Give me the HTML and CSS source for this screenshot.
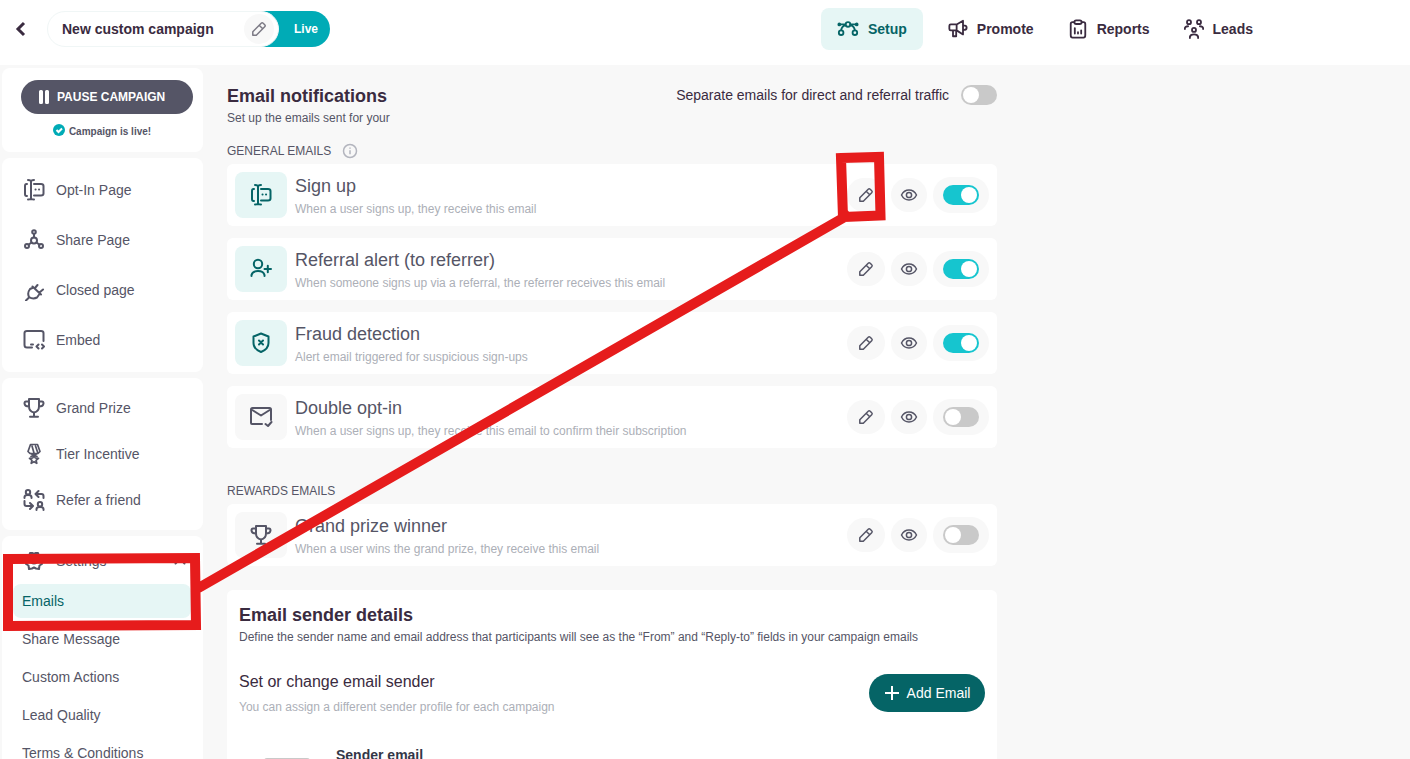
FILE: index.html
```
<!DOCTYPE html>
<html lang="en">
<head>
<meta charset="utf-8">
<title>Email notifications</title>
<link rel="stylesheet" href="styles.css">
</head>
<body>
<svg class="sprite" aria-hidden="true">
  <symbol id="optin" viewBox="0 0 22 22"><path d="M4 5H3.500Q2 5 2 7v8q0 2 1.500 2H4M11 5h7q2.500 0 2.500 2v7.500Q20.500 16.500 18 16.500h-7M8 2v18M5 1q3 0 3 1.500Q8 1 11 1M5 20.500q3 0 3-1.500 0 1.500 3 1.500"/><path d="M12.500 10.500h.1M16 10.500h.1"/></symbol>
  <symbol id="share" viewBox="0 0 22 22"><circle cx="11" cy="3" r="1.800"/><circle cx="11" cy="11.500" r="3"/><circle cx="4" cy="17" r="2"/><circle cx="18" cy="17" r="2"/><path d="M11 5v3.500M8.500 13.500l-3 2.300M13.500 13.500l3 2.300"/></symbol>
  <symbol id="plug" viewBox="0 0 22 22"><path d="M3 21.500l3-3M9.500 7.500l8.500 8M10.500 8.500L7 10q-3 4-1 8 4 2.500 8 .5l2.500-3.500M12 9l2.500-3M16.500 13.500L20 10.500"/></symbol>
  <symbol id="embed" viewBox="0 0 22 22"><path d="M9 18.500H4q-2.500 0-2.500-2.500V4Q1.500 2 4 2h14q2.500 0 2.500 2v8M8 15.500h2"/><path d="M15.500 15.500L13.500 17.500l2 2M19 15.500l2 2-2 2"/></symbol>
  <symbol id="cup" viewBox="0 0 22 22"><path d="M6 2h10v7.500q0 5-5 6-5-1-5-6zM6 4.500H3q-1.500 0-1.500 2Q2 9.500 6 9.500M16 4.500h3q1.500 0 1.500 2-.5 3-4.500 3M11 16v3.500M7 19.800h8"/></symbol>
  <symbol id="medal" viewBox="0 0 22 22"><path class="fine" d="M7.500 1.500h7l2.500 7-2 2H7L5 8.500zM9 3l2 7M12.500 3l2 6M7.500 10.500l6.500 3M14.500 10.500L8 13.500M11 12.500l1.200 2.500 3.300.3-2.500 2 .8 3L11 18.700 8.200 20.300l.8-3-2.500-2 3.300-.3z"/></symbol>
  <symbol id="refer" viewBox="0 0 22 22"><circle cx="5" cy="3.200" r="2.200"/><path d="M1.500 9V8q0-2 3.500-2t3.500 2v1M20.500 9V7q0-2-2-2H13M15.500 2L12.500 5l3 3M1.500 12v3q0 2 2 2H9M7 14l3 3-3 3"/><circle cx="17" cy="15.200" r="2.200"/><path d="M13.500 21v-1q0-2 3.500-2t3.500 2v1"/></symbol>
  <symbol id="gear" viewBox="0 0 22 22"><path d="M7 3h2.500q1.500 1.500 3 0H15l1 3.500 3 1.500-1.500 3 1.500 3-2.500 1.500-.5 3.500-3-.5-2-1-2 1-3 .5-.5-3.500L3 14l1.500-3L3 8l3-1.500z"/><circle cx="11" cy="10.500" r="3"/></symbol>
  <symbol id="setup" viewBox="0 0 24 18"><path d="M3 4h6M14.500 4h6M9 5Q5 6 4.500 10.500M15 5q4 1 4.500 5.500"/><circle cx="2.500" cy="4" r="1"/><circle cx="21.500" cy="4" r="1"/><circle cx="12" cy="4" r="2.500"/><circle cx="4.500" cy="13" r="2.500"/><circle cx="19.500" cy="13" r="2.500"/></symbol>
  <symbol id="promote" viewBox="0 0 22 22"><path d="M9.500 6H3Q1.500 6 1.500 7.500V11Q1.500 12.500 3 12.500h6.500zM9.500 6L16.500 2v15L9.500 12.500M5.500 13v6H9v-6M17 7q3.500 0 3.500 2.500T17 12"/></symbol>
  <symbol id="report" viewBox="0 0 22 22"><path d="M7 3.500H5q-2 0-2 2V18q0 2.500 2 2.500h12q2 0 2-2.500V5.500q0-2-2-2h-2"/><rect x="7" y="1.500" width="8" height="4" rx="2"/><path d="M7.500 10v6M11 14.500V16M14.500 12.500V16"/></symbol>
  <symbol id="leads" viewBox="0 0 22 22"><circle cx="5.500" cy="3.500" r="2.200"/><circle cx="16.500" cy="3.500" r="2.200"/><circle cx="11" cy="12" r="2.200"/><path d="M1 11V10q.5-2 3.500-2M21 11v-1q-.5-2-3.500-2M6.500 21v-1.500q.5-2.500 4.500-2.500t4.500 2.500V21"/></symbol>
  <symbol id="user" viewBox="0 0 22 22"><circle cx="8" cy="6" r="4.200"/><path d="M1.500 18v-1q1-4 6.500-4t6.500 4v1M14.500 11h6.500M17.800 7.800v6.400"/></symbol>
  <symbol id="shield" viewBox="0 0 22 22"><path d="M11 1.500l7.500 3V11q0 6-7.500 9Q3.500 17 3.500 11V4.500zM9 8.500l4 4M13 8.500l-4 4"/></symbol>
  <symbol id="mail" viewBox="0 0 24 22"><path d="M13 18H3Q2 18 2 17V3.500Q2 2 3.500 2h17Q22 2 22 3.500V14M2.500 3.500L12 9.500l9.500-6M16.500 18l2.500 2 3.500-4"/></symbol>
  <symbol id="pencil" viewBox="0 0 16 16"><path d="M1.800 14.200v-3.500L10.200 2.300q1-1 2 0l1.500 1.500q1 1 0 2L5.300 14.200zM8.200 4.300l3.500 3.500"/></symbol>
  <symbol id="eye" viewBox="0 0 18 14"><path d="M1.500 7Q4 2 9 2t7.500 5Q14 12 9 12T1.500 7z"/><circle cx="9" cy="7" r="2.600"/></symbol>
</svg>

<header class="topbar">
  <button class="back" aria-label="Back"><svg class="icon" width="14" height="16" viewBox="0 0 14 16"><path class="chevron" d="M10 2L4 8l6 6"/></svg></button>
  <div class="campaign">
    <div class="campaign-name"><span>New custom campaign</span><button class="rename" aria-label="Rename campaign"><svg class="icon" width="16" height="16"><use href="#pencil"/></svg></button></div>
    <span class="live">Live</span>
  </div>
  <nav class="tabs">
    <a class="tab tab-active" href="#"><svg class="icon" width="22" height="18"><use href="#setup"/></svg>Setup</a>
    <a class="tab" href="#"><svg class="icon" width="20" height="20"><use href="#promote"/></svg>Promote</a>
    <a class="tab" href="#"><svg class="icon" width="20" height="20"><use href="#report"/></svg>Reports</a>
    <a class="tab" href="#"><svg class="icon" width="20" height="20"><use href="#leads"/></svg>Leads</a>
  </nav>
</header>

<div class="layout">
  <aside class="sidebar">
    <section class="panel status">
      <button class="pause"><svg width="12" height="16" viewBox="0 0 12 16"><path class="solid" d="M2.500 1h1Q5 1 5 2.500v11Q5 15 3.500 15h-1Q1 15 1 13.500v-11Q1 1 2.500 1zM8.500 1h1Q11 1 11 2.500v11Q11 15 9.500 15h-1Q7 15 7 13.500v-11Q7 1 8.500 1z"/></svg>PAUSE CAMPAIGN</button>
      <p class="status-text"><svg width="12" height="12" viewBox="0 0 12 12"><circle class="badge" cx="6" cy="6" r="6"/><path class="tick" d="M3.500 6l2 2 3.500-3.500"/></svg><span>Campaign is live!</span></p>
    </section>
    <nav class="panel">
      <a class="side-link" href="#"><svg class="icon" width="22" height="22"><use href="#optin"/></svg>Opt-In Page</a>
      <a class="side-link" href="#"><svg class="icon" width="22" height="22"><use href="#share"/></svg>Share Page</a>
      <a class="side-link" href="#"><svg class="icon" width="22" height="22"><use href="#plug"/></svg>Closed page</a>
      <a class="side-link" href="#"><svg class="icon" width="22" height="22"><use href="#embed"/></svg>Embed</a>
    </nav>
    <nav class="panel compact">
      <a class="side-link" href="#"><svg class="icon" width="22" height="22"><use href="#cup"/></svg>Grand Prize</a>
      <a class="side-link" href="#"><svg class="icon" width="22" height="22"><use href="#medal"/></svg>Tier Incentive</a>
      <a class="side-link" href="#"><svg class="icon" width="22" height="22"><use href="#refer"/></svg>Refer a friend</a>
    </nav>
    <nav class="panel settings">
      <button class="side-link settings-toggle"><svg class="icon" width="22" height="22"><use href="#gear"/></svg>Settings<svg class="icon caret" width="12" height="8" viewBox="0 0 12 8"><path d="M1.500 6.500L6 2l4.500 4.500"/></svg></button>
      <a class="sub-link sub-active" href="#">Emails</a>
      <a class="sub-link" href="#">Share Message</a>
      <a class="sub-link" href="#">Custom Actions</a>
      <a class="sub-link" href="#">Lead Quality</a>
      <a class="sub-link" href="#">Terms &amp; Conditions</a>
    </nav>
  </aside>

  <main class="content">
    <div class="page-head">
      <div><h1>Email notifications</h1><p class="intro">Set up the emails sent for your</p></div>
      <label class="separate">Separate emails for direct and referral traffic<input class="switch" type="checkbox"></label>
    </div>

    <h2 class="group-label">GENERAL EMAILS <svg class="info" width="16" height="16" viewBox="0 0 16 16"><circle cx="8" cy="8" r="6.500"/><path d="M8 7.300v4M8 4.500v1.200"/></svg></h2>
    <div class="email-list">
      <article class="email">
        <div class="tile tile-on"><svg class="icon" width="22" height="22"><use href="#optin"/></svg></div>
        <div class="email-text"><h3>Sign up</h3><p>When a user signs up, they receive this email</p></div>
        <button class="action edit" aria-label="Edit Sign up"><svg class="icon" width="16" height="16"><use href="#pencil"/></svg></button>
        <button class="action" aria-label="Preview Sign up"><svg class="icon" width="18" height="14"><use href="#eye"/></svg></button>
        <label class="switch-wrap"><input class="switch" type="checkbox" checked aria-label="Sign up"></label>
      </article>
      <article class="email">
        <div class="tile tile-on"><svg class="icon" width="22" height="22"><use href="#user"/></svg></div>
        <div class="email-text"><h3>Referral alert (to referrer)</h3><p>When someone signs up via a referral, the referrer receives this email</p></div>
        <button class="action edit" aria-label="Edit Referral alert"><svg class="icon" width="16" height="16"><use href="#pencil"/></svg></button>
        <button class="action" aria-label="Preview Referral alert"><svg class="icon" width="18" height="14"><use href="#eye"/></svg></button>
        <label class="switch-wrap"><input class="switch" type="checkbox" checked aria-label="Referral alert"></label>
      </article>
      <article class="email">
        <div class="tile tile-on"><svg class="icon" width="22" height="22"><use href="#shield"/></svg></div>
        <div class="email-text"><h3>Fraud detection</h3><p>Alert email triggered for suspicious sign-ups</p></div>
        <button class="action edit" aria-label="Edit Fraud detection"><svg class="icon" width="16" height="16"><use href="#pencil"/></svg></button>
        <button class="action" aria-label="Preview Fraud detection"><svg class="icon" width="18" height="14"><use href="#eye"/></svg></button>
        <label class="switch-wrap"><input class="switch" type="checkbox" checked aria-label="Fraud detection"></label>
      </article>
      <article class="email">
        <div class="tile"><svg class="icon" width="24" height="22"><use href="#mail"/></svg></div>
        <div class="email-text"><h3>Double opt-in</h3><p>When a user signs up, they receive this email to confirm their subscription</p></div>
        <button class="action edit" aria-label="Edit Double opt-in"><svg class="icon" width="16" height="16"><use href="#pencil"/></svg></button>
        <button class="action" aria-label="Preview Double opt-in"><svg class="icon" width="18" height="14"><use href="#eye"/></svg></button>
        <label class="switch-wrap"><input class="switch" type="checkbox" aria-label="Double opt-in"></label>
      </article>
    </div>

    <h2 class="group-label rewards">REWARDS EMAILS</h2>
    <div class="email-list">
      <article class="email">
        <div class="tile"><svg class="icon" width="22" height="22"><use href="#cup"/></svg></div>
        <div class="email-text"><h3>Grand prize winner</h3><p>When a user wins the grand prize, they receive this email</p></div>
        <button class="action edit" aria-label="Edit Grand prize winner"><svg class="icon" width="16" height="16"><use href="#pencil"/></svg></button>
        <button class="action" aria-label="Preview Grand prize winner"><svg class="icon" width="18" height="14"><use href="#eye"/></svg></button>
        <label class="switch-wrap"><input class="switch" type="checkbox" aria-label="Grand prize winner"></label>
      </article>
    </div>

    <section class="sender">
      <h2 class="sender-title">Email sender details</h2>
      <p class="intro">Define the sender name and email address that participants will see as the “From” and “Reply-to” fields in your campaign emails</p>
      <div class="sender-row">
        <div><h3>Set or change email sender</h3><p>You can assign a different sender profile for each campaign</p></div>
        <button class="add"><svg width="16" height="16" viewBox="0 0 16 16"><path d="M8 1v14M1 8h14"/></svg>Add Email</button>
      </div>
      <div class="sender-item"><div class="sender-thumb"></div><h4>Sender email</h4></div>
    </section>
  </main>
</div>

<svg class="callout" width="900" height="640" viewBox="0 0 900 640" aria-hidden="true">
  <path d="M8 559L195 558L196 625L8 626zM841 158L879 157L880.500 215.500L843 217zM195 590L850 214"/>
</svg>
</body>
</html>
```
FILE: styles.css
```
* { box-sizing: border-box; }
body {
  margin: 0;
  height: 100vh;
  display: flex;
  flex-direction: column;
  overflow: hidden;
  position: relative;
  background: #f8f8f8;
  color: #555566;
  font: 14px/20px "Liberation Sans", Arial, sans-serif;
}
h1, h2, h3, h4, p { margin: 0; font-weight: normal; }
a { color: inherit; text-decoration: none; }
button { padding: 0; border: 0; background: none; color: inherit; font: inherit; cursor: pointer; }
svg { flex: none; fill: none; }
.sprite { display: none; }
.icon { stroke: currentColor; stroke-width: 2; stroke-linecap: round; stroke-linejoin: round; }
.fine { stroke-width: 1.700; }

.topbar {
  flex: none;
  height: 65px;
  display: flex;
  align-items: flex-start;
  padding: 8px 141px 0 14px;
  background: #fff;
  color: #3a2b40;
  font-weight: bold;
}
.back { height: 42px; display: flex; align-items: center; color: #3a2b40; }
.chevron { stroke-width: 3; stroke-linecap: butt; stroke-linejoin: miter; }
.campaign { display: flex; height: 36px; margin: 3px 0 0 19px; }
.campaign-name {
  z-index: 1;
  display: flex;
  align-items: center;
  justify-content: space-between;
  width: 232px;
  padding: 0 4px 0 14px;
  border: 1px solid #f0f6f6;
  border-radius: 18px;
  background: #fff;
}
.rename {
  display: flex;
  align-items: center;
  justify-content: center;
  width: 30px;
  height: 30px;
  border-radius: 50%;
  background: #f8f8f8;
  color: #7c7a85;
}
.rename .icon, .action .icon { stroke-width: 1.500; }
.live {
  margin-left: -32px;
  padding: 0 12px 0 47px;
  border-radius: 0 18px 18px 0;
  background: #00abb6;
  color: #fff;
  font-size: 12px;
  line-height: 36px;
}
.tabs { display: flex; gap: 2px; margin-left: auto; }
.tab { display: flex; align-items: center; gap: 9px; height: 42px; padding: 0 16px; border-radius: 8px; }
.tab-active { margin-right: 7px; background: #e6f6f5; color: #056466; }

.layout { flex: 1; min-height: 0; display: flex; gap: 24px; padding: 3px 0 0 2px; overflow: hidden; }
.sidebar { flex: none; width: 201px; display: flex; flex-direction: column; gap: 6px; }
.panel { flex: none; padding: 7px 10px; border-radius: 8px; background: #fff; }
.status { height: 84px; padding: 12px 10px 0 19px; }
.pause {
  display: flex;
  align-items: center;
  gap: 7px;
  width: 100%;
  height: 34px;
  padding-left: 17px;
  border-radius: 17px;
  background: #555566;
  color: #fff;
  font-size: 12px;
  font-weight: bold;
}
.solid { fill: #fff; }
.status-text {
  display: flex;
  justify-content: center;
  gap: 4px;
  margin-top: 10px;
  padding-right: 10px;
  font-size: 10px;
  font-weight: bold;
  line-height: 16px;
}
.badge { fill: #00abb6; }
.tick { stroke: #fff; stroke-width: 2; }
.side-link { display: flex; align-items: center; gap: 11px; width: 100%; height: 50px; padding-left: 11px; }
.compact .side-link { height: 46px; }
.settings .side-link { height: 36px; margin-bottom: 5px; }
.caret { margin-left: auto; margin-right: 7px; }
.sub-link { display: flex; align-items: center; height: 34px; margin: 0 2px 4px 1px; padding-left: 9px; border-radius: 8px; }
.sub-active { background: #e6f6f5; color: #056466; }

.content { flex: 1; min-width: 0; max-width: 770px; padding-top: 16px; }
.page-head { display: flex; align-items: flex-start; justify-content: space-between; }
h1, .sender-title { color: #3a2b40; font-size: 18px; font-weight: bold; line-height: 24px; }
.intro { font-size: 12px; line-height: 20px; }
.separate { display: flex; align-items: center; gap: 12px; height: 22px; color: #3a2b40; }
.switch {
  appearance: none;
  width: 36px;
  height: 20px;
  margin: 0;
  padding: 2px;
  border-radius: 10px;
  background: #c9c9c9;
}
.switch::before { content: ""; display: block; width: 16px; height: 16px; border-radius: 50%; background: #fff; }
.switch:checked { background: #16c5cf; }
.switch:checked::before { margin-left: 16px; }
.group-label { display: flex; align-items: center; gap: 11px; height: 26px; margin-top: 10px; font-size: 12px; }
.rewards { margin-top: 30px; }
.info { stroke: #b3b5be; stroke-width: 1.500; }
.email-list { display: flex; flex-direction: column; gap: 12px; }
.email { display: flex; align-items: center; gap: 6px; padding: 8px; border-radius: 6px; background: #fff; }
.tile {
  display: flex;
  align-items: center;
  justify-content: center;
  width: 52px;
  height: 46px;
  border-radius: 8px;
  background: #f8f8f8;
}
.tile-on { background: #e6f6f5; color: #056466; }
.email-text { flex: 1; min-width: 0; padding-left: 2px; }
.email-text h3 { font-size: 18px; line-height: 28px; }
.email-text p { color: #acafb7; font-size: 12px; line-height: 18px; }
.action {
  display: flex;
  align-items: center;
  justify-content: center;
  width: 36px;
  height: 34px;
  border-radius: 18px;
  background: #f8f8f8;
}
.edit { width: 38px; }
.switch-wrap { display: flex; align-items: center; justify-content: center; width: 56px; height: 36px; border-radius: 18px; background: #f8f8f8; }

.sender { margin-top: 24px; padding: 13px 12px 12px; border-radius: 6px; background: #fff; }
.sender-row { display: flex; align-items: center; justify-content: space-between; margin-top: 21px; }
.sender-row h3 { color: #3a2b40; font-size: 16px; line-height: 28px; }
.sender-row p { color: #acafb7; font-size: 12px; line-height: 22px; }
.add {
  display: flex;
  align-items: center;
  justify-content: center;
  gap: 7px;
  width: 116px;
  height: 38px;
  border-radius: 19px;
  background: #056466;
  color: #fff;
}
.add svg { stroke: #fff; stroke-width: 2; }
.sender-item { display: flex; gap: 26px; margin-top: 27px; padding-left: 25px; }
.sender-item h4 { color: #333748; font-weight: bold; }
.sender-thumb { width: 46px; height: 46px; margin-top: 13px; border-radius: 3px; background: #c9c9c9; }

.callout { position: absolute; top: 0; left: 0; stroke: #e61c1c; stroke-width: 10; pointer-events: none; }
```
